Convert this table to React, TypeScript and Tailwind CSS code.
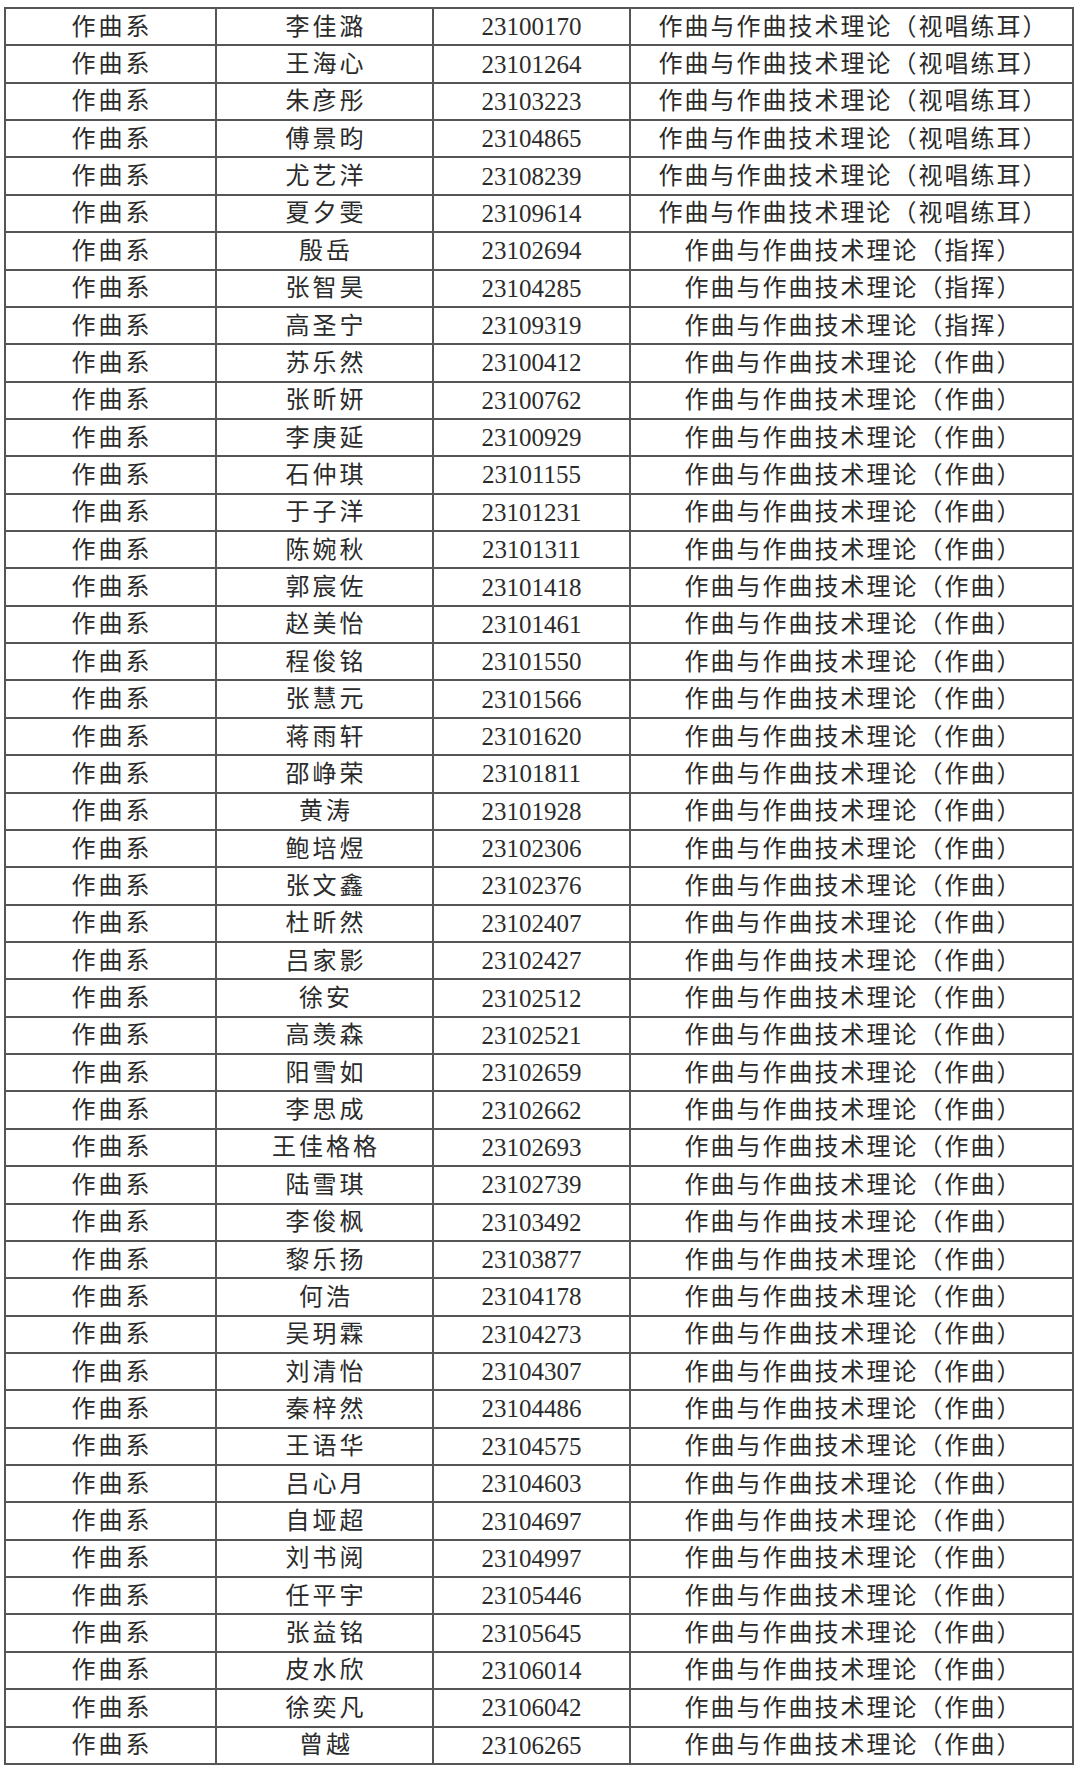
import React from "react";

const rows: [string, string, string][] = [
  ["李佳潞", "23100170", "视唱练耳"],
  ["王海心", "23101264", "视唱练耳"],
  ["朱彦彤", "23103223", "视唱练耳"],
  ["傅景昀", "23104865", "视唱练耳"],
  ["尤艺洋", "23108239", "视唱练耳"],
  ["夏夕雯", "23109614", "视唱练耳"],
  ["殷岳", "23102694", "指挥"],
  ["张智昊", "23104285", "指挥"],
  ["高圣宁", "23109319", "指挥"],
  ["苏乐然", "23100412", "作曲"],
  ["张昕妍", "23100762", "作曲"],
  ["李庚延", "23100929", "作曲"],
  ["石仲琪", "23101155", "作曲"],
  ["于子洋", "23101231", "作曲"],
  ["陈婉秋", "23101311", "作曲"],
  ["郭宸佐", "23101418", "作曲"],
  ["赵美怡", "23101461", "作曲"],
  ["程俊铭", "23101550", "作曲"],
  ["张慧元", "23101566", "作曲"],
  ["蒋雨轩", "23101620", "作曲"],
  ["邵峥荣", "23101811", "作曲"],
  ["黄涛", "23101928", "作曲"],
  ["鲍培煜", "23102306", "作曲"],
  ["张文鑫", "23102376", "作曲"],
  ["杜昕然", "23102407", "作曲"],
  ["吕家影", "23102427", "作曲"],
  ["徐安", "23102512", "作曲"],
  ["高羡森", "23102521", "作曲"],
  ["阳雪如", "23102659", "作曲"],
  ["李思成", "23102662", "作曲"],
  ["王佳格格", "23102693", "作曲"],
  ["陆雪琪", "23102739", "作曲"],
  ["李俊枫", "23103492", "作曲"],
  ["黎乐扬", "23103877", "作曲"],
  ["何浩", "23104178", "作曲"],
  ["吴玥霖", "23104273", "作曲"],
  ["刘清怡", "23104307", "作曲"],
  ["秦梓然", "23104486", "作曲"],
  ["王语华", "23104575", "作曲"],
  ["吕心月", "23104603", "作曲"],
  ["自垭超", "23104697", "作曲"],
  ["刘书阅", "23104997", "作曲"],
  ["任平宇", "23105446", "作曲"],
  ["张益铭", "23105645", "作曲"],
  ["皮水欣", "23106014", "作曲"],
  ["徐奕凡", "23106042", "作曲"],
  ["曾越", "23106265", "作曲"],
];

const cjk =
  "flex items-center justify-center border-r-2 border-b-2 border-[#555555] text-[24px] tracking-[3px] pl-[3px] leading-none h-[37.36px]";
const cjk4 =
  "flex items-center justify-center border-r-2 border-b-2 border-[#555555] text-[24px] tracking-[2px] pl-[4px] leading-none h-[37.36px]";

export default function App() {
  return (
    <div
      className="w-[1080px] h-[1772px] bg-white pt-[7px] pl-[4px] text-[#2b2b2b]"
      style={{ fontFamily: '"Liberation Serif", "Noto Sans CJK SC", serif' }}
    >
      <div className="grid grid-cols-[211px_217px_197px_443px] w-[1070px] border-t-2 border-l-2 border-[#555555]">
        {rows.map(([name, id, dir], i) => (
          <React.Fragment key={i}>
            <div className={cjk}>作曲系</div>
            <div className={cjk}>{name}</div>
            <div className="flex items-center justify-center border-r-2 border-b-2 border-[#555555] text-[25px] leading-none h-[37.36px]">
              {id}
            </div>
            <div className={cjk4}>{`作曲与作曲技术理论（${dir}）`}</div>
          </React.Fragment>
        ))}
      </div>
    </div>
  );
}
